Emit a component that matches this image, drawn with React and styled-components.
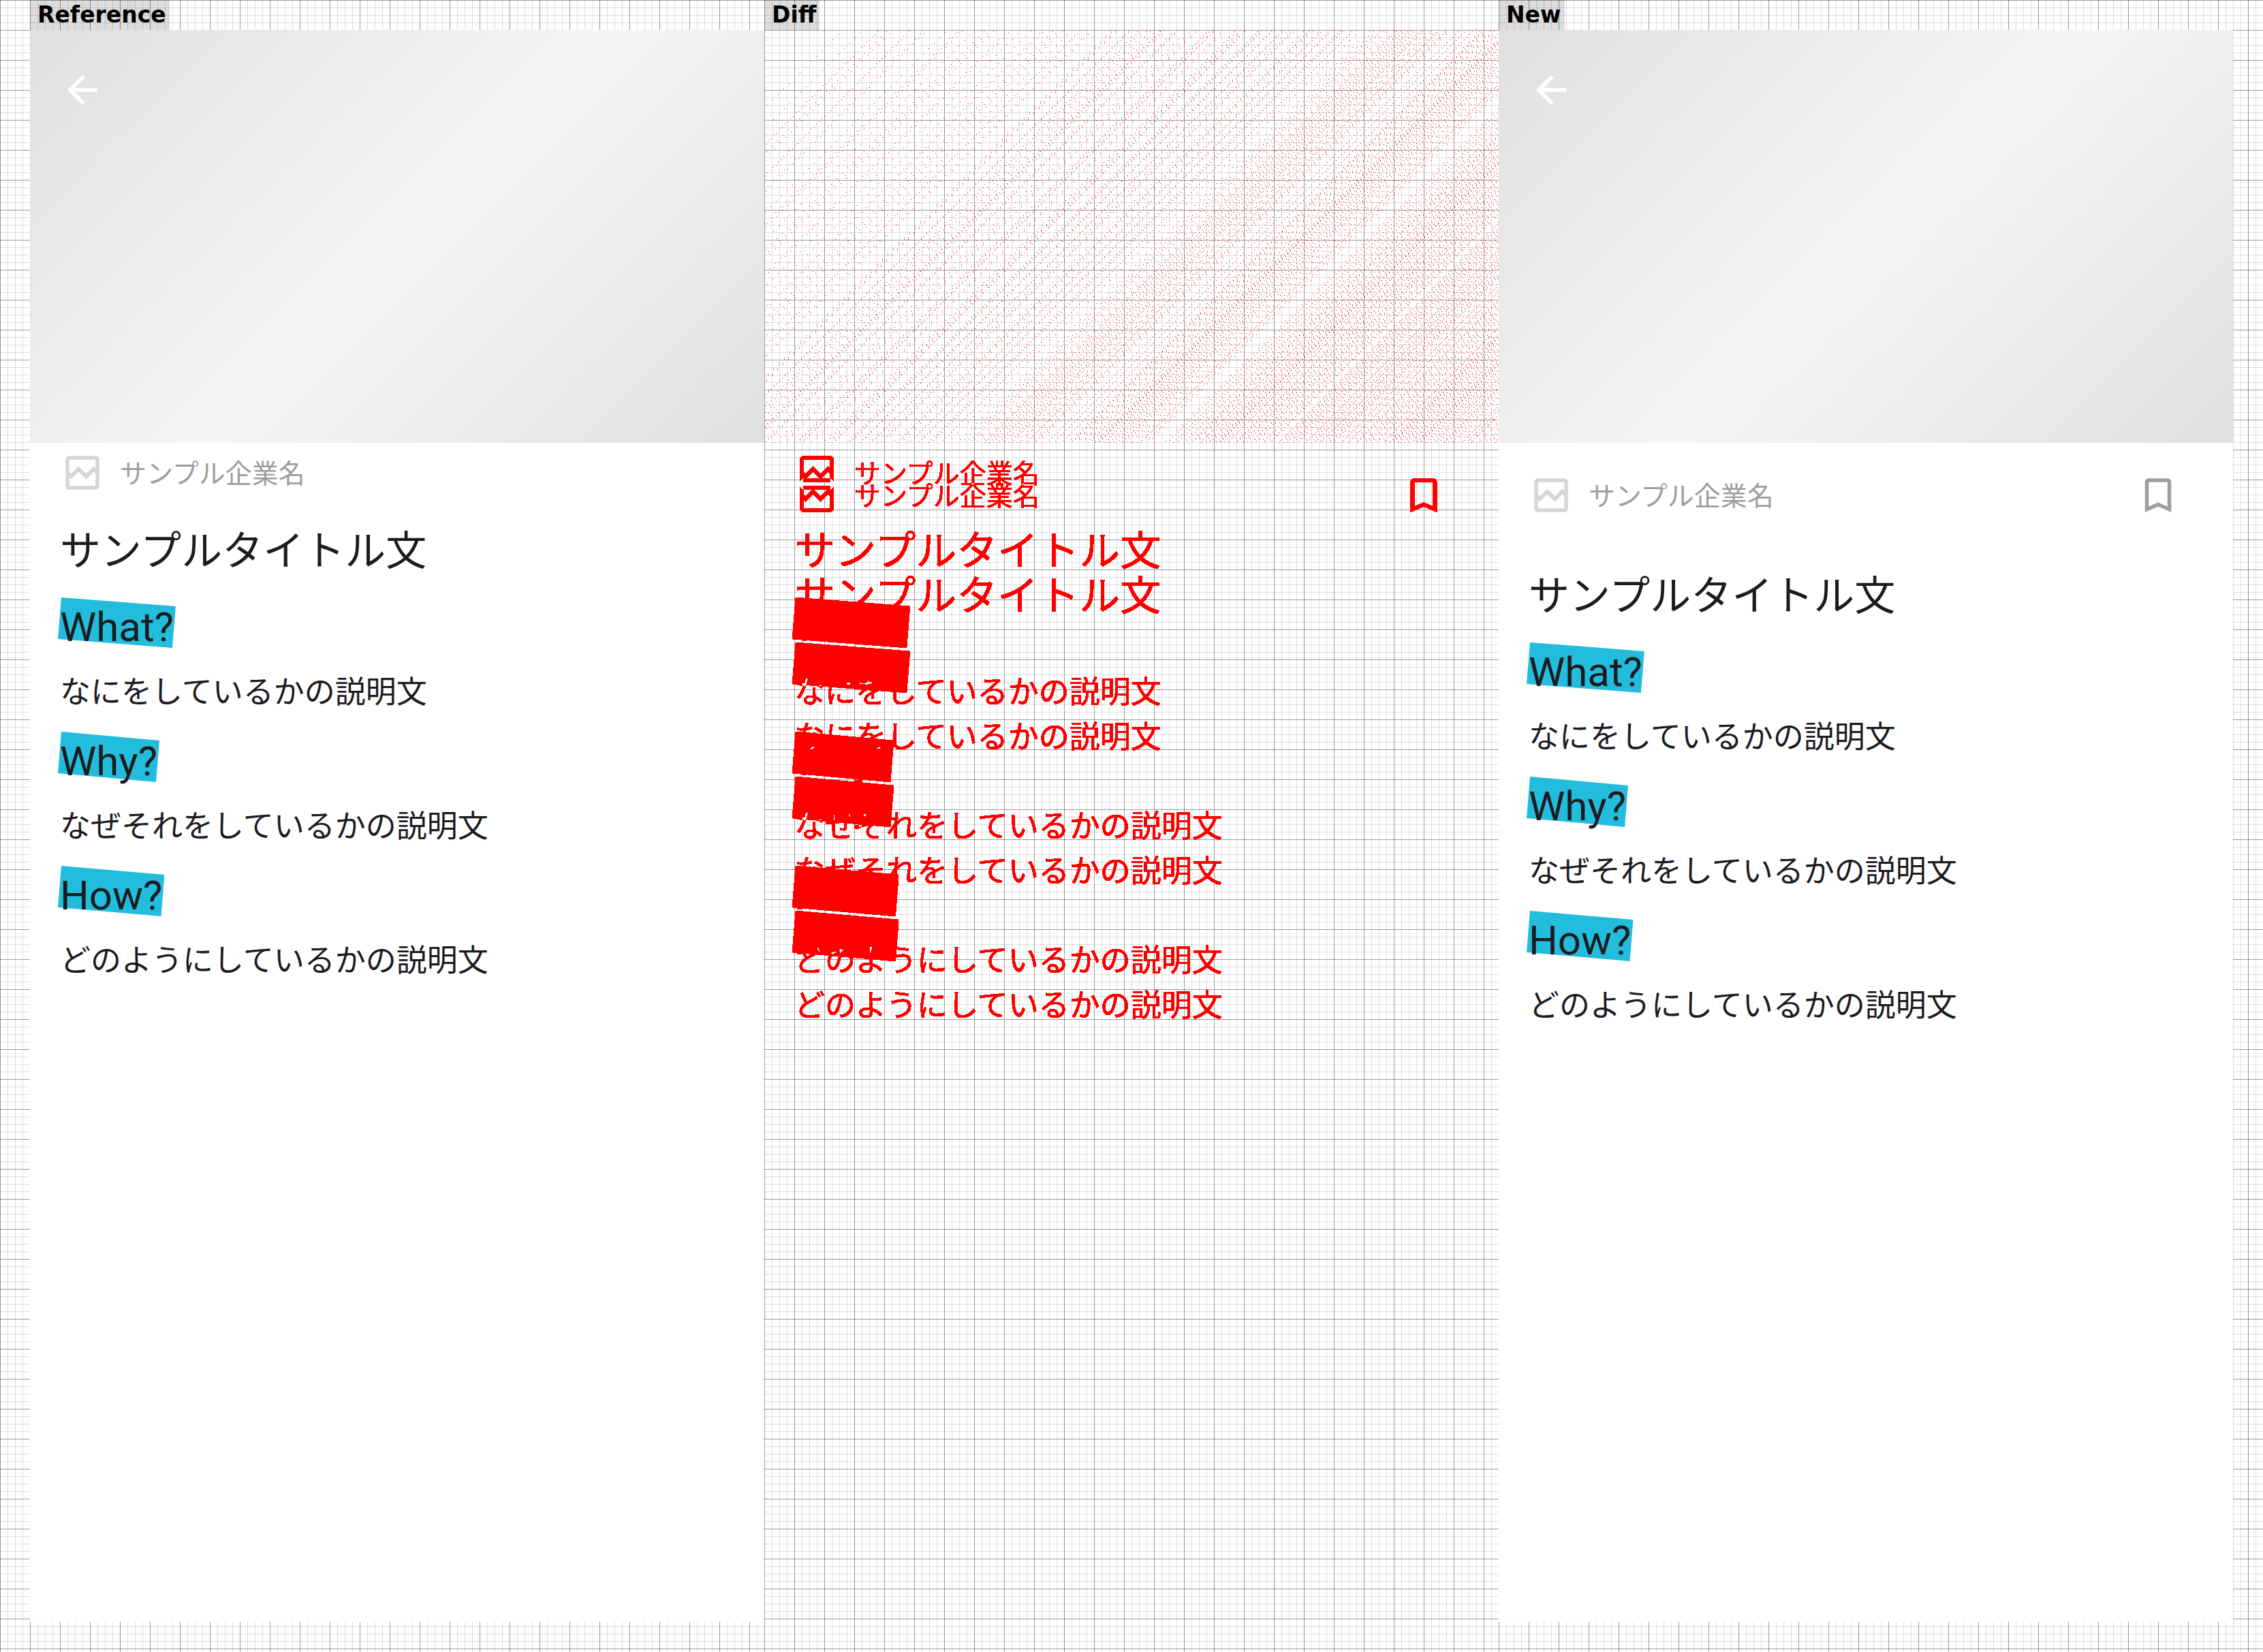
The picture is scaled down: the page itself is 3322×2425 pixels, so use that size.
import React, { useLayoutEffect, useRef } from "react";
import styled, { createGlobalStyle, css } from "styled-components";

const GlobalStyle = createGlobalStyle`
  *, *::before, *::after { box-sizing: border-box; }
  body { margin: 0; background: #fff; }
  h2, h3, p, figure { margin: 0; font-weight: 400; }
`;

const gridPaper = css`
  --minor: rgba(0, 0, 0, 0.12);
  --major: rgba(0, 0, 0, 0.3);
  background-color: #fff;
  background-image:
    linear-gradient(to right, var(--major) 1px, transparent 1px),
    linear-gradient(to bottom, var(--major) 1px, transparent 1px),
    linear-gradient(to right, var(--minor) 1px, transparent 1px),
    linear-gradient(to bottom, var(--minor) 1px, transparent 1px);
  background-size: 44px 44px, 44px 44px, 11px 11px, 11px 11px;
`;

const Page = styled.main`
  ${gridPaper}
  display: grid;
  grid-template-columns: repeat(3, 1fr);
  min-height: 100vh;
  padding: 0 44px;
`;

const Column = styled.figure`
  ${gridPaper}
  display: flex;
  flex-direction: column;
  min-width: 0;
  padding-bottom: 44px;
`;

const Label = styled.figcaption`
  align-self: flex-start;
  height: 44px;
  padding: 0 5px 0 11px;
  background: rgba(0, 0, 0, 0.133);
  color: #000;
  font: 700 33px/44px "DejaVu Sans", sans-serif;
`;

const Screen = styled.article`
  flex: 1;
  background: #fff;
  color: #1c1b1f;
  font-family: Roboto, "Noto Sans CJK JP", sans-serif;
`;

const Hero = styled.header`
  aspect-ratio: 1078 / 606;
  padding: 22px 11px;
  background: linear-gradient(135deg, #e0e0e0, #f5f5f5 51%, #e0e0e0);
`;

const IconButton = styled.button`
  display: flex;
  align-items: center;
  justify-content: center;
  width: 132px;
  height: 132px;
  padding: 0;
  border: 0;
  background: none;
  color: ${(p) => p.$color};
`;

const Icon = styled.svg`
  flex: none;
  width: 66px;
  height: 66px;
  fill: ${(p) => p.$color || "currentColor"};
`;

const Content = styled.div`
  padding: 11px 44px 44px;
`;

const CompanyRow = styled.div`
  display: flex;
  align-items: center;
`;

const Company = styled.p`
  flex: 1;
  padding: 4px 0 0 22px;
  color: #9e9e9e;
  font-size: 39px;
  line-height: 55px;
`;

const Title = styled.h2`
  margin-top: 44px;
  font-size: 60px;
  line-height: 77px;
`;

const Sections = styled.div`
  display: flex;
  flex-direction: column;
  gap: 29px;
  margin-top: 34px;
`;

const Heading = styled.h3`
  position: relative;
  isolation: isolate;
  width: fit-content;
  font-size: 60px;
  line-height: 77px;

  &::before {
    content: "";
    position: absolute;
    inset: -5px -3px 8px;
    z-index: -1;
    background: #22bddc;
    clip-path: polygon(5px 0, 100% 13px, calc(100% - 5px) 100%, 0 calc(100% - 13px));
  }
`;

const Description = styled.p`
  margin-top: 25px;
  font-size: 45px;
  line-height: 66px;
`;

const DiffStack = styled.div`
  flex: 1;
  display: grid;
`;

const Comparison = styled.div`
  grid-area: 1 / 1;
  display: grid;
  isolation: isolate;
  filter: url(#changed-pixels);
`;

const Layer = styled.div`
  grid-area: 1 / 1;
  display: flex;
  flex-direction: column;
  mix-blend-mode: ${(p) => (p.$compare ? "difference" : "normal")};
`;

const Noise = styled.canvas`
  grid-area: 1 / 1;
  align-self: start;
  display: block;
  width: 100%;
  aspect-ratio: 1078 / 606;
`;

const FilterDefs = styled.svg`
  position: absolute;
  width: 0;
  height: 0;
`;

const BackIcon = () => (
  <Icon viewBox="0 0 24 24" aria-hidden="true">
    <path d="M20 11H7.83l5.59-5.59L12 4l-8 8 8 8 1.41-1.41L7.83 13H20v-2z" />
  </Icon>
);

const ImageIcon = () => (
  <Icon viewBox="0 0 24 24" $color="#d6d6d6" aria-hidden="true">
    <path d="M19 3H5c-1.1 0-2 .9-2 2v14c0 1.1.9 2 2 2h14c1.1 0 2-.9 2-2V5c0-1.1-.9-2-2-2zm0 16H5v-4.58l.99 1 4-4 4 4 4-3.99L19 12.43V19zm0-9.41l-1.01-1.01-4 4.01-4-4-4 4-.99-1V5h14v4.59z" />
  </Icon>
);

const BookmarkIcon = () => (
  <Icon viewBox="0 0 24 24" aria-hidden="true">
    <path d="M17 3H7c-1.1 0-2 .9-2 2v16l7-3 7 3V5c0-1.1-.9-2-2-2zm0 15l-5-2.18L7 18V5h10v13z" />
  </Icon>
);

const SECTIONS = [
  ["What?", "なにをしているかの説明文"],
  ["Why?", "なぜそれをしているかの説明文"],
  ["How?", "どのようにしているかの説明文"],
];

function Detail({ bookmark }) {
  return (
    <Screen>
      <Hero>
        <IconButton type="button" aria-label="Back" $color="#fff">
          <BackIcon />
        </IconButton>
      </Hero>
      <Content>
        <CompanyRow>
          <ImageIcon />
          <Company>サンプル企業名</Company>
          {bookmark && (
            <IconButton type="button" aria-label="Bookmark" $color="#9e9e9e">
              <BookmarkIcon />
            </IconButton>
          )}
        </CompanyRow>
        <Title>サンプルタイトル文</Title>
        <Sections>
          {SECTIONS.map(([heading, text]) => (
            <section key={heading}>
              <Heading>{heading}</Heading>
              <Description>{text}</Description>
            </section>
          ))}
        </Sections>
      </Content>
    </Screen>
  );
}

// Ordered-dither threshold for an 8x8 matrix, in the range 0..1.
function threshold(x, y) {
  let v = 0;
  for (let bit = 0; bit < 3; bit++) {
    const bx = (x >> bit) & 1;
    const by = (y >> bit) & 1;
    v = (v << 2) | ((bx ^ by) << 1) | by;
  }
  return (v + 0.5) / 64;
}

// Marks the pixels at which two dithered gradients round to different levels.
function GradientNoise() {
  const ref = useRef(null);
  useLayoutEffect(() => {
    const canvas = ref.current;
    const w = (canvas.width = canvas.clientWidth);
    const h = (canvas.height = canvas.clientHeight);
    const ctx = canvas.getContext("2d");
    ctx.fillStyle = "#f00";
    for (let y = 0; y < h; y++) {
      for (let x = 0; x < w; x++) {
        const t = (x + y) / (w + h);
        const level = 21 * (t < 0.51 ? t / 0.51 : (1 - t) / 0.49);
        const d = threshold(x, y);
        if (Math.floor(level + d) !== Math.floor(level + d + 0.06 * t)) {
          ctx.fillRect(x, y, 1, 1);
        }
      }
    }
  }, []);
  return <Noise ref={ref} aria-hidden="true" />;
}

export default function App() {
  return (
    <>
      <GlobalStyle />
      <FilterDefs aria-hidden="true">
        <filter id="changed-pixels" x="0" y="0" width="100%" height="100%" colorInterpolationFilters="sRGB">
          <feColorMatrix values="0 0 0 0 1  0 0 0 0 0  0 0 0 0 0  12 12 12 0 -0.4" />
        </filter>
      </FilterDefs>
      <Page>
        <Column>
          <Label>Reference</Label>
          <Detail />
        </Column>
        <Column>
          <Label>Diff</Label>
          <DiffStack>
            <Comparison>
              <Layer>
                <Detail />
              </Layer>
              <Layer $compare>
                <Detail bookmark />
              </Layer>
            </Comparison>
            <GradientNoise />
          </DiffStack>
        </Column>
        <Column>
          <Label>New</Label>
          <Detail bookmark />
        </Column>
      </Page>
    </>
  );
}
